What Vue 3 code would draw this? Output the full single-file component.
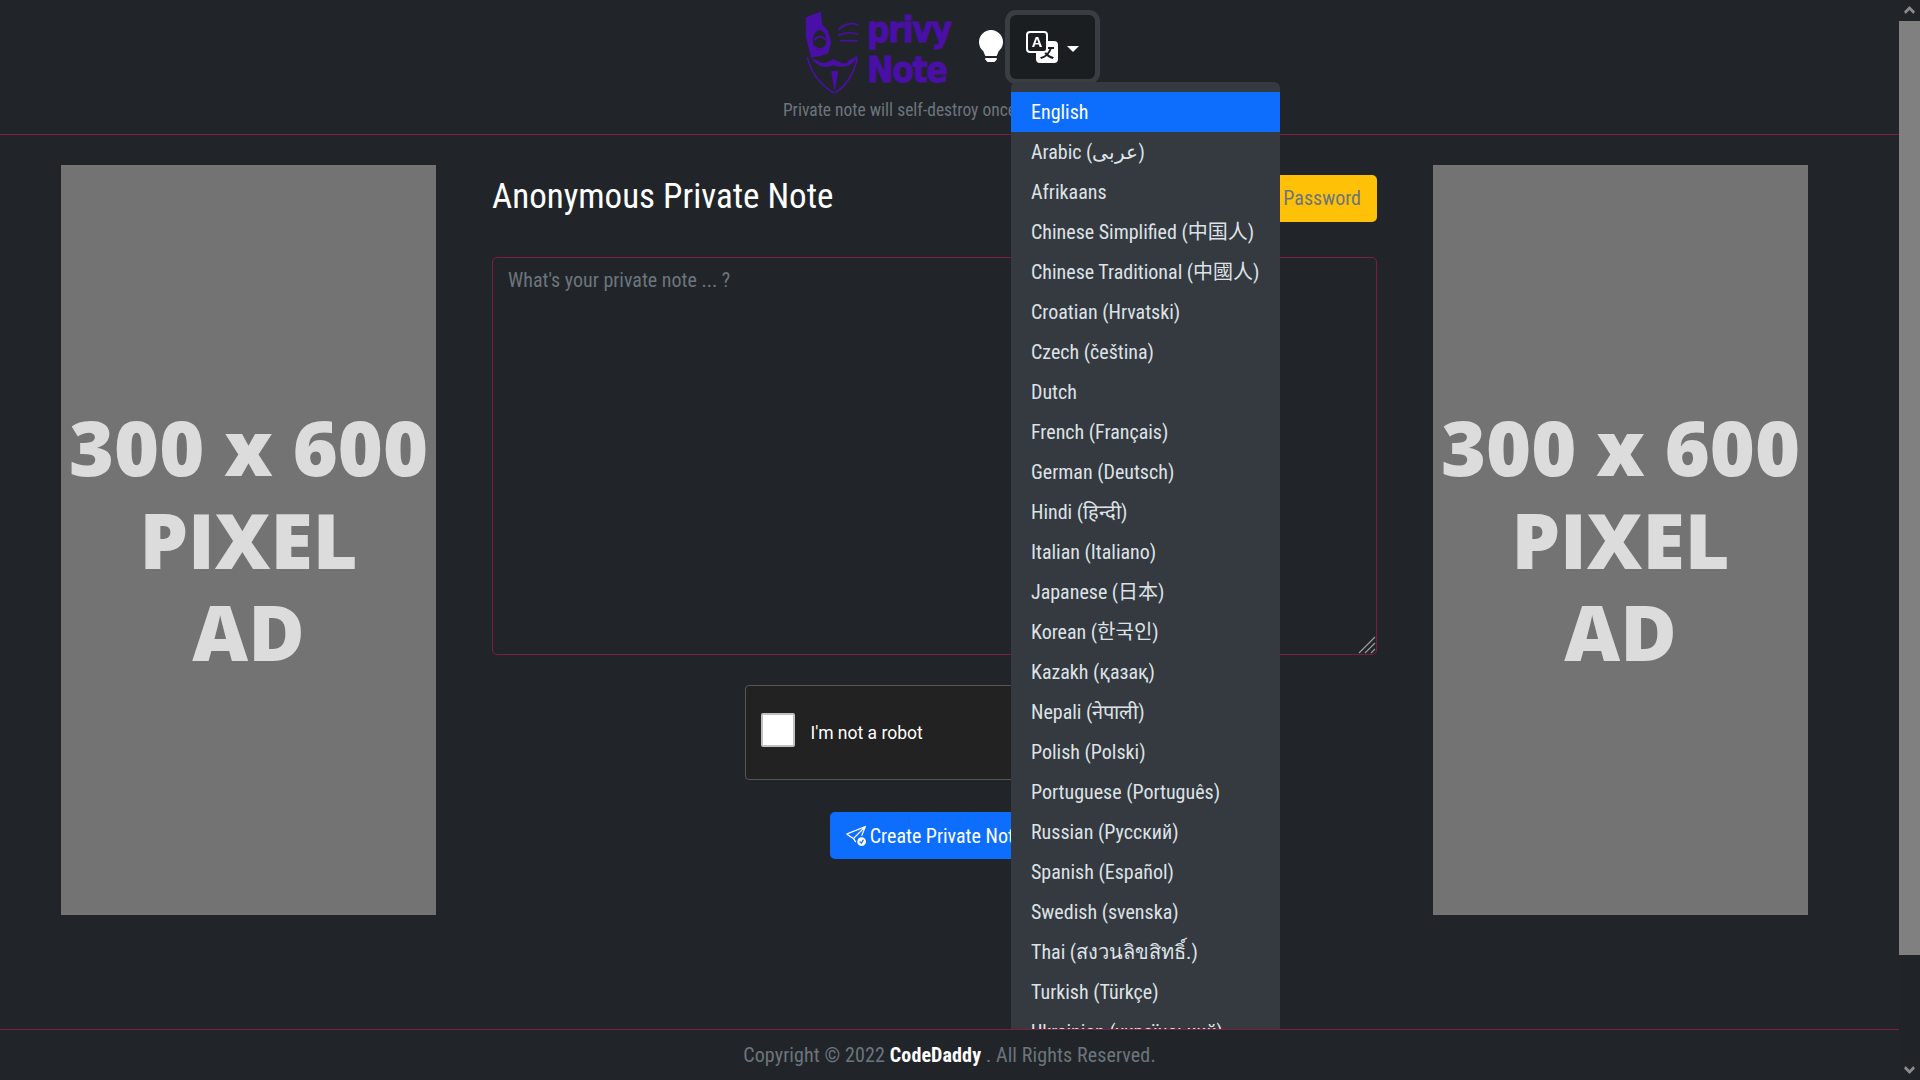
<template>
  <div class="page">
    <div class="viewport">
      <header class="top">
        <div class="brand-row">
          <div class="logo">
            <svg class="mask" viewBox="40 25 170 260" aria-hidden="true">
              <path d="M45 48 L92 30 L96 68 L114 90 L124 125 L114 160 L88 168 L62 172 L46 110Z" />
              <ellipse class="hole" cx="88" cy="118" rx="21" ry="30" />
              <path class="thin" d="M72 118 C82 104 98 104 108 118" />
              <path class="thin" d="M74 138 C84 148 96 148 106 138" />
              <path class="thin" d="M50 170 C62 225 100 262 132 282" />
              <path class="thin" d="M205 172 C195 225 165 262 136 282" />
              <path d="M62 172 C95 195 122 188 130 176 C146 192 178 188 206 165 C192 206 152 204 130 196 C110 206 82 204 62 172Z" />
              <ellipse class="hole" cx="98" cy="184" rx="12" ry="4" />
              <ellipse class="hole" cx="164" cy="186" rx="12" ry="4" />
              <path d="M124 214 L146 214 L135 280Z" />
              <path class="thin" d="M146 88 C160 68 190 62 208 72" />
              <path class="thin" d="M146 104 C165 94 190 94 208 100" />
              <path class="thin" d="M152 120 H206" />
            </svg>
            <div class="logo-text">
              <span>privy</span>
              <span>Note</span>
            </div>
          </div>
          <svg class="bulb" viewBox="0 0 16 16" fill="currentColor" aria-hidden="true">
            <path d="M2 6a6 6 0 1 1 10.174 4.31c-.203.196-.359.4-.453.619l-.762 1.769A.5.5 0 0 1 10.5 13h-5a.5.5 0 0 1-.46-.302l-.761-1.77a1.964 1.964 0 0 0-.453-.618A5.984 5.984 0 0 1 2 6zm3 8.5a.5.5 0 0 1 .5-.5h5a.5.5 0 0 1 0 1l-.224.447a1 1 0 0 1-.894.553H6.618a1 1 0 0 1-.894-.553L5.5 15a.5.5 0 0 1-.5-.5z" />
          </svg>
          <div class="lang">
            <button class="lang-btn" type="button">
              <svg class="translate" viewBox="0 0 16 16" fill="currentColor" aria-hidden="true">
                <path d="M4.545 6.714 4.11 8H3l1.862-5h1.284L8 8H6.833l-.435-1.286H4.545zm1.634-.736L5.5 3.956h-.049l-.679 2.022H6.18z" />
                <path d="M0 2a2 2 0 0 1 2-2h7a2 2 0 0 1 2 2v3h3a2 2 0 0 1 2 2v7a2 2 0 0 1-2 2H7a2 2 0 0 1-2-2v-3H2a2 2 0 0 1-2-2V2zm2-1a1 1 0 0 0-1 1v7a1 1 0 0 0 1 1h7a1 1 0 0 0 1-1V2a1 1 0 0 0-1-1H2zm7.138 9.995c.193.301.402.583.63.846-.748.575-1.673 1.001-2.768 1.292.178.217.451.635.555.867 1.125-.359 2.08-.844 2.886-1.494.777.665 1.739 1.165 2.93 1.472.133-.254.414-.673.629-.89-1.125-.253-2.057-.694-2.82-1.284.681-.747 1.222-1.651 1.621-2.757H14V8h-3v1.047h.765c-.318.844-.74 1.546-1.272 2.13a6.066 6.066 0 0 1-.415-.492 1.988 1.988 0 0 1-.94.31z" />
              </svg>
              <span class="caret"></span>
            </button>
            <ul class="lang-menu">
              <li v-for="(l, i) in languages" :key="l" :class="{ active: i === 0 }">{{ l }}</li>
            </ul>
          </div>
        </div>
        <p class="tagline">Private note will self-destroy once it's been read.</p>
      </header>

      <main class="content">
        <div class="ad"><span>300 x 600</span><span>PIXEL</span><span>AD</span></div>

        <section class="note">
          <div class="note-head">
            <h3>Anonymous Private Note</h3>
            <button class="pass-btn" type="button">Set Password</button>
          </div>
          <div class="note-field">
            <textarea class="note-input" placeholder="What's your private note ... ?"></textarea>
            <svg class="grip" viewBox="0 0 18 18" aria-hidden="true">
              <path d="M1 17 17 1M7 17 17 7M13 17l4-4" />
            </svg>
          </div>
          <div class="captcha">
            <span class="check"></span>
            <span class="captcha-label">I'm not a robot</span>
          </div>
          <button class="create-btn" type="button">
            <svg viewBox="0 0 16 16" fill="currentColor" aria-hidden="true">
              <path d="M15.964.686a.5.5 0 0 0-.65-.65L.767 5.855a.75.75 0 0 0-.124 1.329l4.995 3.178 1.531 2.406a.5.5 0 0 0 .844-.536L6.637 10.07l7.494-7.494-1.895 4.738a.5.5 0 1 0 .928.372l2.8-7Zm-2.54 1.183L5.93 9.363 1.591 6.602l11.833-4.733Z" />
              <path d="M16 12.5a3.5 3.5 0 1 1-7 0 3.5 3.5 0 0 1 7 0Zm-1.993-1.679a.5.5 0 0 0-.686.172l-1.17 1.95-.547-.547a.5.5 0 0 0-.708.708l.774.773a.75.75 0 0 0 1.174-.144l1.335-2.226a.5.5 0 0 0-.172-.686Z" />
            </svg>
            Create Private Note
          </button>
        </section>

        <div class="ad"><span>300 x 600</span><span>PIXEL</span><span>AD</span></div>
      </main>

      <footer class="bottom">
        Copyright © 2022 <b>CodeDaddy</b> . All Rights Reserved.
      </footer>
    </div>

    <div class="scrollbar">
      <span class="arrow up"></span>
      <span class="thumb"></span>
      <span class="arrow down"></span>
    </div>
  </div>
</template>

<script setup>
const languages = [
  'English',
  'Arabic (عربى)',
  'Afrikaans',
  'Chinese Simplified (中国人)',
  'Chinese Traditional (中國人)',
  'Croatian (Hrvatski)',
  'Czech (čeština)',
  'Dutch',
  'French (Français)',
  'German (Deutsch)',
  'Hindi (हिन्दी)',
  'Italian (Italiano)',
  'Japanese (日本)',
  'Korean (한국인)',
  'Kazakh (қазақ)',
  'Nepali (नेपाली)',
  'Polish (Polski)',
  'Portuguese (Português)',
  'Russian (Русский)',
  'Spanish (Español)',
  'Swedish (svenska)',
  'Thai (สงวนลิขสิทธิ์.)',
  'Turkish (Türkçe)',
  'Ukrainian (український)'
]
</script>

<style>
html, body {
  margin: 0;
  overflow: hidden;
  background: #212529;
}
</style>

<style scoped>
.page {
  display: flex;
  height: 1080px;
  overflow: hidden;
  background: #212529;
  color: #dee2e6;
  font-family: "Roboto Condensed", Roboto, "Noto Sans CJK SC", sans-serif;
  font-stretch: 87%;
  font-size: 20px;
  line-height: 30px;
}
.viewport {
  flex: 1;
  min-width: 0;
  display: flex;
  flex-direction: column;
}
.top {
  height: 134px;
  border-bottom: 1px solid #7a1f3e;
  display: flex;
  flex-direction: column;
  align-items: center;
}
.brand-row {
  display: flex;
  align-items: flex-start;
  height: 97px;
  padding-top: 10px;
  box-sizing: border-box;
}
.logo {
  display: flex;
  width: 145px;
  height: 83px;
  color: #4a0fa6;
}
.mask {
  width: 55px;
  height: 84px;
  flex: none;
}
.mask path {
  fill: #4a0fa6;
}
.mask .thin {
  fill: none;
  stroke: #4a0fa6;
  stroke-width: 5;
}
.mask .hole {
  fill: #212529;
}
.logo-text {
  margin-left: 8px;
  display: flex;
  flex-direction: column;
  font-family: "DejaVu Sans Condensed", "DejaVu Sans", sans-serif;
  font-stretch: normal;
  font-weight: 700;
  font-size: 35px;
  line-height: 40px;
  letter-spacing: -1.2px;
  -webkit-text-stroke: 1px #4a0fa6;
}
.bulb {
  width: 32px;
  height: 32px;
  margin: 20px 0 0 26px;
  color: #fff;
}
.lang {
  position: relative;
  margin-left: 3px;
  margin-top: 5px;
}
.lang-btn {
  width: 85px;
  height: 64px;
  display: flex;
  align-items: center;
  padding: 0 0 0 16px;
  border: 0;
  border-radius: 6px;
  background: #1a1e21;
  box-shadow: 0 0 0 5px #3a3e42;
  color: #fff;
}
.translate {
  width: 32px;
  height: 32px;
}
.caret {
  margin-left: 9px;
  margin-top: 4px;
  border-top: 6px solid #fff;
  border-left: 6px solid transparent;
  border-right: 6px solid transparent;
}
.lang-menu {
  position: absolute;
  z-index: 1;
  top: 67px;
  left: 1px;
  min-width: 269px;
  margin: 0;
  padding: 10px 0;
  list-style: none;
  background: #343a40;
  border-radius: 6px;
  white-space: nowrap;
}
.lang-menu li {
  height: 40px;
  padding: 5px 20px;
  box-sizing: border-box;
}
.lang-menu li.active {
  background: #0d6efd;
  color: #fff;
}
.tagline {
  margin: 0;
  font-size: 17.5px;
  line-height: 26px;
  color: #6c757d;
}
.content {
  flex: 1;
  display: grid;
  grid-template-columns: 375px 885px 375px;
  column-gap: 56px;
  padding: 30px 91px 0 61px;
  align-items: start;
}
.ad {
  height: 750px;
  background: #737373;
  color: #dcdcdc;
  display: flex;
  flex-direction: column;
  align-items: center;
  justify-content: center;
  font-family: "Open Sans", sans-serif;
  font-stretch: normal;
  font-weight: 800;
  font-size: 77px;
  line-height: 92.5px;
  white-space: nowrap;
}
.note {
  display: flex;
  flex-direction: column;
  align-items: center;
}
.note-head {
  align-self: stretch;
  display: flex;
  justify-content: space-between;
  align-items: flex-start;
  height: 92px;
}
.note-head h3 {
  margin: 0;
  font-size: 35px;
  line-height: 42px;
  font-weight: 400;
  color: #fff;
  padding-top: 11px;
}
.pass-btn {
  margin-top: 10px;
  height: 47px;
  padding: 0 16px 2px 15px;
  border: 0;
  border-radius: 0 5px 5px 0;
  background: #ffc107;
  color: #6c757d;
  font: inherit;
}
.note-field {
  position: relative;
  align-self: stretch;
  display: flex;
}
.note-input {
  flex: 1;
  height: 398px;
  box-sizing: border-box;
  padding: 7px 15px;
  background: transparent;
  border: 1px solid #7a1f3e;
  border-radius: 5px;
  color: #dee2e6;
  font: inherit;
  outline: 0;
  resize: none;
}
.note-input::placeholder {
  color: #6c757d;
}
.grip {
  position: absolute;
  right: 1px;
  bottom: 1px;
  width: 18px;
  height: 18px;
}
.grip path {
  fill: none;
  stroke: #9a9a9a;
  stroke-width: 1.2;
}
.captcha {
  width: 380px;
  height: 95px;
  margin-top: 30px;
  box-sizing: border-box;
  display: flex;
  align-items: center;
  padding: 0 15px;
  background: #222;
  border: 1px solid #555;
  border-radius: 4px;
}
.check {
  width: 34px;
  height: 34px;
  margin-top: -5px;
  box-sizing: border-box;
  background: #fff;
  border: 2px solid #c1c1c1;
  border-radius: 2px;
}
.captcha-label {
  margin-left: 16px;
  font-family: Roboto, sans-serif;
  font-stretch: normal;
  font-size: 17.5px;
  color: #fff;
}
.create-btn {
  margin-top: 32px;
  height: 47px;
  padding: 0 16px;
  display: flex;
  align-items: center;
  gap: 4px;
  border: 0;
  border-radius: 5px;
  background: #0d6efd;
  color: #fff;
  font: inherit;
}
.create-btn svg {
  width: 20px;
  height: 20px;
}
.bottom {
  position: relative;
  z-index: 2;
  height: 51px;
  box-sizing: border-box;
  border-top: 1px solid #7a1f3e;
  background: #212529;
  text-align: center;
  line-height: 50px;
  letter-spacing: .12px;
  color: #6c757d;
}
.bottom b {
  color: #fff;
}
.scrollbar {
  width: 21px;
  flex: none;
  position: relative;
  background: #202327;
}
.thumb {
  position: absolute;
  top: 21px;
  left: 0;
  right: 0;
  height: 934px;
  background: #808080;
}
.arrow {
  position: absolute;
  left: 5px;
  width: 11px;
  height: 8px;
}
.arrow::before {
  content: "";
  position: absolute;
  inset: 0;
  background: #8a8a8a;
}
.arrow.up {
  top: 6px;
}
.arrow.up::before {
  clip-path: polygon(50% 0, 100% 70%, 85% 100%, 50% 50%, 15% 100%, 0 70%);
}
.arrow.down {
  bottom: 6px;
}
.arrow.down::before {
  clip-path: polygon(0 30%, 15% 0, 50% 50%, 85% 0, 100% 30%, 50% 100%);
}
</style>
